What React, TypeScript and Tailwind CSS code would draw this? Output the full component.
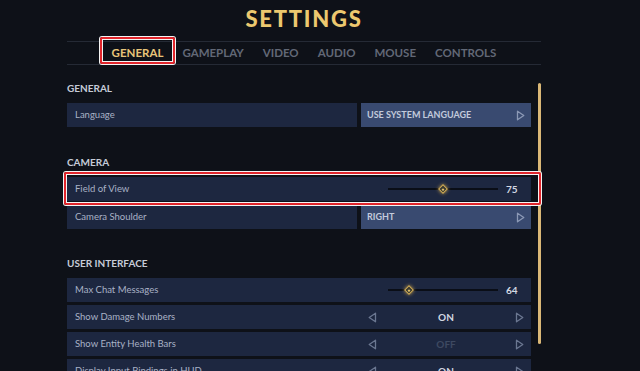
import React from "react";

const tabs = ["GENERAL", "GAMEPLAY", "VIDEO", "AUDIO", "MOUSE", "CONTROLS"];

type Row =
  | { kind: "select"; label: string; value: string }
  | { kind: "slider"; label: string; value: number; mark?: boolean }
  | { kind: "toggle"; label: string; on: boolean };

const sections: { title: string; gap: string; rows: Row[] }[] = [
  {
    title: "GENERAL",
    gap: "gap-[4px]",
    rows: [{ kind: "select", label: "Language", value: "USE SYSTEM LANGUAGE" }],
  },
  {
    title: "CAMERA",
    gap: "gap-[4px]",
    rows: [
      { kind: "slider", label: "Field of View", value: 75, mark: true },
      { kind: "select", label: "Camera Shoulder", value: "RIGHT" },
    ],
  },
  {
    title: "USER INTERFACE",
    gap: "gap-[3px]",
    rows: [
      { kind: "slider", label: "Max Chat Messages", value: 64 },
      { kind: "toggle", label: "Show Damage Numbers", on: true },
      { kind: "toggle", label: "Show Entity Health Bars", on: false },
      { kind: "toggle", label: "Display Input Bindings in HUD", on: true },
    ],
  },
];

const Arrow = ({ left, color }: { left?: boolean; color: string }) => (
  <svg width="9" height="11" viewBox="0 0 9 11" className={left ? "rotate-180" : ""}>
    <path d="M1.5 1.2 L7.8 5.5 L1.5 9.8 Z" fill="none" stroke={color} strokeWidth="1.3" strokeLinejoin="round" />
  </svg>
);

// red annotation frame
const Mark = ({ className }: { className: string }) => (
  <div
    className={
      "pointer-events-none absolute rounded-[2px] border-2 border-[#e1252b] shadow-[0_0_0_1px_#f4f4f4,inset_0_0_0_1px_#f4f4f4] " +
      className
    }
  />
);

const SettingRow = ({ row }: { row: Row }) => {
  if (row.kind === "select") {
    return (
      <div className="flex h-[24px] gap-[4px]">
        <div className="flex flex-1 items-center bg-[#1d2740] pl-[8px] text-[9.5px] text-[#a9b2c6]">{row.label}</div>
        <div className="flex w-[170px] items-center justify-between bg-[#394a70] pl-[6px] pr-[6px] text-[9px] font-bold text-[#c3cbdc]">
          <span>{row.value}</span>
          <Arrow color="#8c99b6" />
        </div>
      </div>
    );
  }
  if (row.kind === "slider") {
    const pct = ((row.value - 57) / 36) * 100;
    return (
      <div className="relative flex h-[24px] items-center bg-[#1d2740] pl-[8px] text-[9.5px] text-[#a9b2c6]">
        <span className="flex-1">{row.label}</span>
        <div className="flex w-[170px] items-center pl-[27px]">
          <div className="relative h-[2px] w-[110px] bg-[#0a0e17]">
            <div
              className="absolute top-1/2 h-[7px] w-[7px] -translate-x-1/2 -translate-y-1/2 rotate-45 border border-[#d2ad58] bg-[#3a3a30] shadow-[0_0_4px_#c9a24f]"
              style={{ left: `${pct}%` }}
            >
              <div className="m-auto mt-[1.5px] h-[2px] w-[2px] bg-[#e6c66f]" />
            </div>
          </div>
          <span className="ml-[8px] text-[10px] font-bold text-[#d3d8e2]">{row.value}</span>
        </div>
        {row.mark && <Mark className="-left-[3px] -top-[5px] h-[33px] w-[477px]" />}
      </div>
    );
  }
  return (
    <div className="flex h-[24px] items-center bg-[#1d2740] pl-[8px] text-[9.5px] text-[#a9b2c6]">
      <span className="flex-1">{row.label}</span>
      <div className="flex w-[170px] items-center justify-between px-[7px]">
        <Arrow left color="#6b7791" />
        <span className={"text-[10px] font-bold " + (row.on ? "text-[#d3d8e2]" : "text-[#3d4961]")}>
          {row.on ? "ON" : "OFF"}
        </span>
        <Arrow color="#6b7791" />
      </div>
    </div>
  );
};

export default function App() {
  return (
    <div className="h-[371px] w-[640px] overflow-hidden bg-[#0e1118] font-['Lato',sans-serif]">
      <div className="ml-[67px] w-[474px] pt-[8px] text-center text-[22px] font-black leading-[22px] tracking-[0.08em] text-[#ecc86f]">
        SETTINGS
      </div>

      <div className="ml-[67px] mt-[11px] flex h-[24px] w-[474px] items-center justify-center gap-[19px] border-y border-[#252a35] text-[11.5px] font-bold">
        {tabs.map((t, i) => (
          <div key={t} className={"relative " + (i === 0 ? "text-[#e8c57a]" : "text-[#626876]")}>
            {t}
            {i === 0 && <Mark className="-left-[12px] -top-[7px] h-[27px] w-[75px]" />}
          </div>
        ))}
      </div>

      <div className="ml-[67px] flex gap-[7px] pt-[18px]">
        <div className="flex w-[464px] flex-col">
          {sections.map((s, i) => (
            <div key={s.title} className={i === 0 ? "" : i === 1 ? "mt-[30px]" : "mt-[29px]"}>
              <div className="h-[11px] text-[10px] font-bold leading-[11px] text-[#c6ccd8]">{s.title}</div>
              <div className={"mt-[9px] flex flex-col " + s.gap}>
                {s.rows.map((r) => (
                  <SettingRow key={r.label} row={r} />
                ))}
              </div>
            </div>
          ))}
        </div>
        <div className="h-[261px] w-[3px] self-start rounded-full bg-[#dab877]" />
      </div>
    </div>
  );
}
